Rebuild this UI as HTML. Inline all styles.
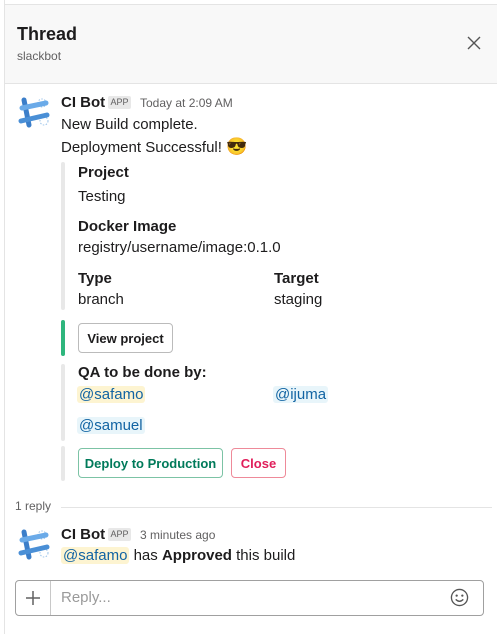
<!DOCTYPE html>
<html><head><meta charset="utf-8"><style>
*{margin:0;padding:0;box-sizing:border-box}
body{width:497px;height:634px;background:#fff;font-family:"Liberation Sans",sans-serif;color:#1d1c1d;position:relative;overflow:hidden}
.a{position:absolute;white-space:nowrap;line-height:20px}
.b{font-weight:bold}
.t{font-size:15px}
.m{color:#1264a3;background:#e8f5fa;border-radius:3px;padding:0 2px}
.m.y{background:#fdf4d1}
.btn{position:absolute;border:1px solid #bbb;border-radius:4px;font-size:13px;font-weight:bold;display:flex;align-items:center;justify-content:center}
.bar{position:absolute;left:61px;width:4px;border-radius:2px;background:#e8e8e8}
</style></head><body>
<div style="position:absolute;left:4px;top:0;width:1px;height:634px;background:#e4e4e4"></div>
<div style="position:absolute;left:5px;top:4px;right:0;height:80px;background:#f8f8f8;border-top:1px solid #e4e4e4;border-bottom:1px solid #e4e4e4"></div>
<div class="a b" style="left:17px;top:24px;font-size:18px;">Thread</div>
<div class="a" style="left:17px;top:46px;font-size:12px;color:#616061">slackbot</div>
<svg class="a" style="left:466px;top:35px" width="16" height="16" viewBox="0 0 16 16"><path d="M2 2L14 14M14 2L2 14" stroke="#555" stroke-width="1.4"/></svg>

<svg class="a" style="left:16px;top:95px" width="36" height="36" viewBox="0 0 36 36">
<circle cx="26" cy="8" r="4" fill="none" stroke="#9cc4ea" stroke-dasharray="1.5 1.5"/>
<circle cx="28" cy="26" r="4" fill="none" stroke="#9cc4ea" stroke-dasharray="1.5 1.5"/>
<path d="M8 5L13 30" stroke="#3b7ec9" stroke-width="5" stroke-linecap="round"/>
<path d="M6 13L30 8" stroke="#6aaae8" stroke-width="5" stroke-linecap="round"/>
<path d="M5 26L31 20" stroke="#4a8fd6" stroke-width="5" stroke-linecap="round"/>
</svg>
<div class="a b" style="left:61px;top:93px;font-size:15px">CI Bot</div>
<div class="a" style="left:108px;top:96px;width:23px;height:13px;line-height:13px;background:#e8e8e8;color:#616061;font-size:9px;text-align:center;border-radius:2px">APP</div>
<div class="a" style="left:140px;top:93px;font-size:12px;color:#616061">Today at 2:09 AM</div>
<div class="a t" style="left:61px;top:115px">New Build complete.</div>
<div class="a t" style="left:61px;top:137px">Deployment Successful! <span style="font-size:17px">😎</span></div>

<div class="bar" style="top:162px;height:148px"></div>
<div class="a t b" style="left:78px;top:163px">Project</div>
<div class="a t" style="left:78px;top:187px">Testing</div>
<div class="a t b" style="left:78px;top:217px">Docker Image</div>
<div class="a t" style="left:78px;top:238px">registry/username/image:0.1.0</div>
<div class="a t b" style="left:78px;top:269px">Type</div>
<div class="a t b" style="left:274px;top:269px">Target</div>
<div class="a t" style="left:78px;top:290px">branch</div>
<div class="a t" style="left:274px;top:290px">staging</div>

<div class="bar" style="top:320px;height:36px;background:#2eb67d"></div>
<div class="btn" style="left:78px;top:323px;width:95px;height:30px;color:#1d1c1d">View project</div>

<div class="bar" style="top:364px;height:77px"></div>
<div class="a t b" style="left:78px;top:363px">QA to be done by:</div>
<div class="a t" style="left:77px;top:385px"><span class="m y">@safamo</span></div>
<div class="a t" style="left:273px;top:385px"><span class="m">@ijuma</span></div>
<div class="a t" style="left:77px;top:416px"><span class="m">@samuel</span></div>

<div class="bar" style="top:446px;height:35px"></div>
<div class="btn" style="left:78px;top:448px;width:145px;height:30px;color:#007a5a;border-color:#7cc3a5">Deploy to Production</div>
<div class="btn" style="left:231px;top:448px;width:55px;height:30px;color:#e01e5a;border-color:#ee8a99">Close</div>

<div class="a" style="left:15px;top:496px;font-size:12px;color:#616061">1 reply</div>
<div style="position:absolute;left:61px;top:507px;width:431px;height:1px;background:#e4e4e4"></div>

<svg class="a" style="left:16px;top:527px" width="36" height="36" viewBox="0 0 36 36">
<circle cx="26" cy="8" r="4" fill="none" stroke="#9cc4ea" stroke-dasharray="1.5 1.5"/>
<circle cx="28" cy="26" r="4" fill="none" stroke="#9cc4ea" stroke-dasharray="1.5 1.5"/>
<path d="M8 5L13 30" stroke="#3b7ec9" stroke-width="5" stroke-linecap="round"/>
<path d="M6 13L30 8" stroke="#6aaae8" stroke-width="5" stroke-linecap="round"/>
<path d="M5 26L31 20" stroke="#4a8fd6" stroke-width="5" stroke-linecap="round"/>
</svg>
<div class="a b" style="left:61px;top:525px;font-size:15px">CI Bot</div>
<div class="a" style="left:108px;top:528px;width:23px;height:13px;line-height:13px;background:#e8e8e8;color:#616061;font-size:9px;text-align:center;border-radius:2px">APP</div>
<div class="a" style="left:140px;top:525px;font-size:12px;color:#616061">3 minutes ago</div>
<div class="a t" style="left:61px;top:546px"><span class="m y">@safamo</span> has <b>Approved</b> this build</div>

<div style="position:absolute;left:15px;top:580px;width:469px;height:36px;border:1px solid #a0a0a0;border-radius:4px"></div>
<div style="position:absolute;left:50px;top:581px;width:1px;height:34px;background:#c8c8c8"></div>
<svg class="a" style="left:25px;top:590px" width="16" height="16" viewBox="0 0 16 16"><path d="M8 1V15M1 8H15" stroke="#616061" stroke-width="1.5"/></svg>
<div class="a" style="left:61px;top:588px;font-size:15px;color:#9a9a9a">Reply...</div>
<svg class="a" style="left:450px;top:588px" width="19" height="19" viewBox="0 0 20 20"><circle cx="10" cy="10" r="8.5" fill="none" stroke="#555" stroke-width="1.4"/><circle cx="7" cy="8" r="1.2" fill="#555"/><circle cx="13" cy="8" r="1.2" fill="#555"/><path d="M6 12Q10 16 14 12" fill="none" stroke="#555" stroke-width="1.4"/></svg>
</body></html>
